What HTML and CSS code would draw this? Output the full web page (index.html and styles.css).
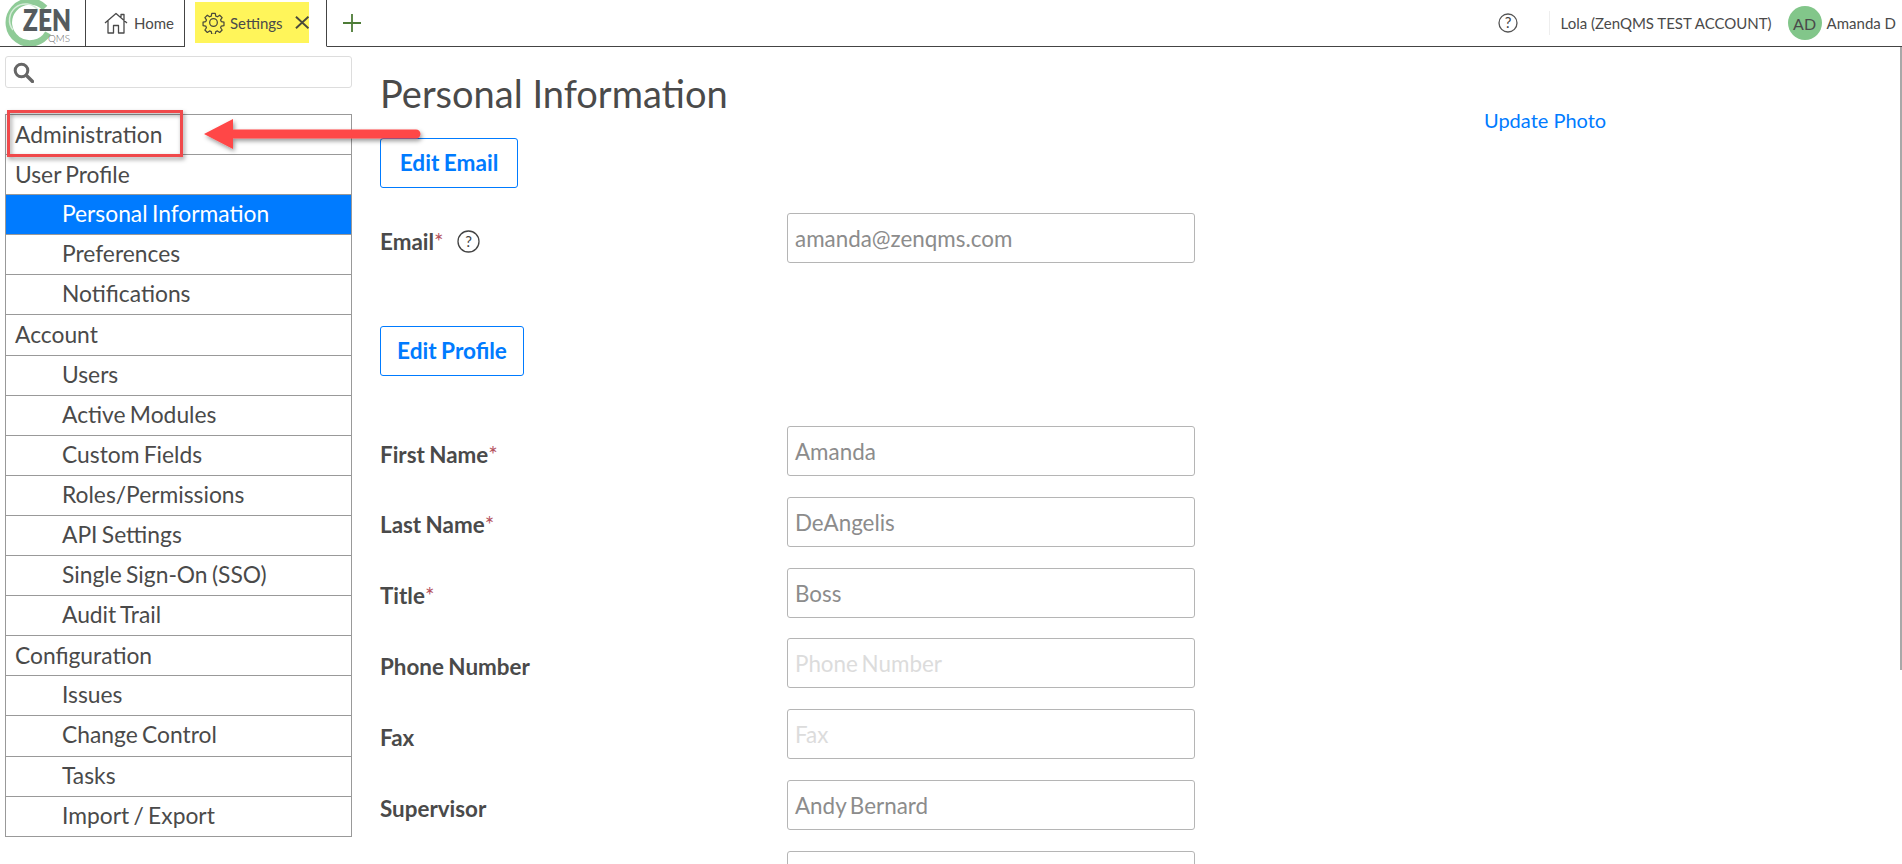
FILE: index.html
```html
<!DOCTYPE html>
<html lang="en">
<head>
<meta charset="utf-8">
<title>Personal Information</title>
<link rel="stylesheet" href="styles.css">
</head>
<body>
<header class="topbar">
  <div class="logo">
    <svg width="85" height="46" viewBox="0 0 85 46">
      <path d="M45 8A21 21 0 1 0 48 33" fill="none" stroke="#8fcb97" stroke-width="6.500"/>
      <path d="M38 10A15.500 15.500 0 0 0 13 30" fill="none" stroke="#d6ecd9" stroke-width="1.500"/>
      <text x="23" y="31" textLength="48" lengthAdjust="spacingAndGlyphs" class="logo-zen">ZEN</text>
      <text x="48" y="42" textLength="22" lengthAdjust="spacingAndGlyphs" class="logo-qms">QMS</text>
    </svg>
  </div>
  <div class="tab tab-home">
    <svg class="tab-icon" width="24" height="22" viewBox="0 0 24 22"><path d="M1 11 12 1.500 23 11M17 6V2.500h3v7M4 9v12h5.500v-7.500h5V21H20V9" fill="none" stroke="#4a4a4a" stroke-width="1.300" stroke-linejoin="round"/></svg>
    <span>Home</span>
  </div>
  <div class="tab tab-settings">
    <div class="tab-mark">
      <svg class="tab-icon" width="23" height="23" viewBox="0 0 24 24"><path d="M10 1.500h4l.6 3.100 1.900.8 2.600-1.800 2.800 2.800-1.800 2.600.8 1.900 3.100.6v4l-3.100.6-.8 1.900 1.800 2.600-2.800 2.800-2.600-1.800-1.900.8-.6 3.100h-4l-.6-3.100-1.900-.8-2.600 1.800-2.800-2.800 1.800-2.600-.8-1.900-3.100-.6v-4l3.100-.6.800-1.900-1.800-2.600 2.800-2.800 2.600 1.800 1.900-.8z" transform="translate(1.100 1.100) scale(.91)" fill="none" stroke="#4a4a3a" stroke-width="1.400" stroke-linejoin="round"/><circle cx="12" cy="12" r="4" fill="none" stroke="#4a4a3a" stroke-width="1.300"/></svg>
      <span>Settings</span>
      <svg class="tab-close" width="15" height="13" viewBox="0 0 15 13"><path d="M1 .5 14 12.500M14 .5 1 12.500" stroke="#4a4a3a" stroke-width="2"/></svg>
    </div>
  </div>
  <svg class="tab-add" width="18" height="18" viewBox="0 0 18 18"><path d="M9 0v18M0 9h18" stroke="#4d7c37" stroke-width="1.800"/></svg>
  <div class="top-right">
    <svg class="help" width="20" height="20" viewBox="0 0 20 20"><circle cx="10" cy="10" r="9" fill="none" stroke="#555" stroke-width="1.300"/><text x="10" y="15" class="help-mark">?</text></svg>
    <span class="top-divider"></span>
    <span class="org">Lola (ZenQMS TEST ACCOUNT)</span>
    <span class="avatar">AD</span>
    <span class="user">Amanda D</span>
  </div>
</header>

<div class="page">
  <aside class="sidebar">
    <div class="search">
      <svg width="21" height="21" viewBox="0 0 21 21"><circle cx="8.500" cy="8.500" r="6.300" fill="none" stroke="#666" stroke-width="3"/><path d="m13.500 13.500 6 6" stroke="#666" stroke-width="3.400" stroke-linecap="round"/></svg>
    </div>
    <nav class="menu">
      <div class="menu-row">Administration</div>
      <div class="menu-row">User Profile</div>
      <div class="menu-row sub active">Personal Information</div>
      <div class="menu-row sub">Preferences</div>
      <div class="menu-row sub">Notifications</div>
      <div class="menu-row">Account</div>
      <div class="menu-row sub">Users</div>
      <div class="menu-row sub">Active Modules</div>
      <div class="menu-row sub">Custom Fields</div>
      <div class="menu-row sub">Roles/Permissions</div>
      <div class="menu-row sub">API Settings</div>
      <div class="menu-row sub">Single Sign-On (SSO)</div>
      <div class="menu-row sub">Audit Trail</div>
      <div class="menu-row">Configuration</div>
      <div class="menu-row sub">Issues</div>
      <div class="menu-row sub">Change Control</div>
      <div class="menu-row sub">Tasks</div>
      <div class="menu-row sub">Import / Export</div>
    </nav>
  </aside>

  <main class="content">
    <div class="form">
      <h1>Personal Information</h1>
      <button class="btn btn-email">Edit Email</button>
      <div class="row row-email">
        <label>Email<span class="req">*</span>
          <svg class="label-help" width="23" height="23" viewBox="0 0 23 23"><circle cx="11.500" cy="11.500" r="10.500" fill="none" stroke="#444" stroke-width="1.300"/><text x="11.500" y="17" class="help-mark">?</text></svg>
        </label>
        <div class="field">amanda@zenqms.com</div>
      </div>
      <button class="btn btn-profile">Edit Profile</button>
      <div class="row"><label>First Name<span class="req">*</span></label><div class="field">Amanda</div></div>
      <div class="row"><label>Last Name<span class="req">*</span></label><div class="field">DeAngelis</div></div>
      <div class="row"><label>Title<span class="req">*</span></label><div class="field">Boss</div></div>
      <div class="row"><label>Phone Number</label><div class="field empty">Phone Number</div></div>
      <div class="row"><label>Fax</label><div class="field empty">Fax</div></div>
      <div class="row"><label>Supervisor</label><div class="field">Andy Bernard</div></div>
      <div class="row"><label></label><div class="field"></div></div>
    </div>
    <a class="photo-link" href="#">Update Photo</a>
  </main>
</div>

<div class="scroll-thumb"></div>

<svg class="annotation" width="440" height="170" viewBox="0 0 440 170">
  <defs>
    <filter id="callout-shadow" x="-10%" y="-30%" width="120%" height="170%">
      <feDropShadow dx="1.500" dy="2.500" stdDeviation="2" flood-color="#000" flood-opacity=".4"/>
    </filter>
  </defs>
  <rect x="8.500" y="111.500" width="173" height="44" fill="none" stroke="#f0484b" stroke-width="3" filter="url(#callout-shadow)"/>
  <path d="M204 134 233 119V129.500H416a4.500 4.500 0 0 1 0 9H233V149z" fill="#ff4646" filter="url(#callout-shadow)"/>
</svg>
</body>
</html>
```

FILE: styles.css
```css
* { box-sizing: border-box; }

html, body {
  margin: 0;
  height: 864px;
  overflow: hidden;
  background: #fff;
  color: #4a4a4a;
  font-family: Lato, "Open Sans", sans-serif;
}

.topbar {
  display: flex;
  align-items: stretch;
  height: 47px;
  border-bottom: 1px solid #444;
  font-size: 15px;
}

.logo {
  width: 86px;
  border-right: 1px solid #444;
  flex: none;
  overflow: hidden;
}

.logo svg { display: block; }
.logo-zen { font: 800 30px Lato, sans-serif; fill: #555b5e; }
.logo-qms { font: 300 10px Lato, sans-serif; fill: #666; }

.tab {
  display: flex;
  align-items: center;
}

.tab-home {
  width: 99px;
  padding-left: 18px;
  gap: 6px;
  border-right: 1px solid #444;
}

.tab-settings {
  width: 142px;
  height: 47px;
  padding: 2px 0 3px 10px;
  border-right: 1px solid #444;
  background: #fff;
  border-bottom: 1px solid #fff;
}

.tab-mark {
  display: flex;
  align-items: center;
  width: 114px;
  height: 41px;
  padding-left: 7px;
  background: #fff55a;
}

.tab-mark span { margin-left: 5px; }
.tab-close { margin-left: 12px; }
.tab-icon { flex: none; }
.tab-add { align-self: center; margin-left: 16px; }

.top-right {
  display: flex;
  align-items: center;
  margin-left: auto;
}

.help { margin-right: 31px; }
.help-mark { font: 400 15px Lato, sans-serif; fill: #444; text-anchor: middle; }

.top-divider {
  width: 1px;
  height: 24px;
  background: #eee;
  margin-right: 11px;
}

.org { margin-right: 16px; font-size: 15px; }

.avatar {
  display: flex;
  align-items: center;
  justify-content: center;
  width: 34px;
  height: 34px;
  border-radius: 50%;
  background: #82c68a;
  font-size: 16px;
  margin-right: 5px;
}

.user { margin-right: 6px; }

.page { display: flex; }

.sidebar {
  flex: none;
  width: 347px;
  margin-left: 5px;
  padding-top: 9px;
}

.search {
  height: 32px;
  border: 1px solid #ddd;
  border-radius: 3px;
  padding: 5px 0 0 7px;
  margin-bottom: 26px;
}

.search svg { display: block; }

.menu {
  border: 1px solid #999;
  border-bottom-width: 0;
}

.menu-row {
  height: 40.1px;
  line-height: 39px;
  padding-left: 9px;
  border-bottom: 1px solid #999;
  font-size: 22.8px;
  word-spacing: -1.500px;
  white-space: nowrap;
}

.menu-row.sub { padding-left: 56px; line-height: 37.500px; }
.menu-row.active { background: #007bff; color: #fff; }

.content {
  flex: 1;
  display: flex;
  align-items: flex-start;
  padding: 24px 0 0 28px;
}

.form { width: 815px; flex: none; }

h1 {
  margin: 0 0 23px;
  font-size: 38px;
  line-height: 44px;
  font-weight: 400;
}

.btn {
  display: block;
  height: 50px;
  padding: 0 0 2px;
  background: #fff;
  border: 1px solid #007bff;
  border-radius: 3px;
  color: #007bff;
  font: 700 22.6px Lato, sans-serif;
  word-spacing: -1px;
}

.btn-email { width: 138px; margin-bottom: 25px; }
.btn-profile { width: 144px; margin: 63px 0 50px; }

.row {
  display: grid;
  grid-template-columns: 407px 408px;
  align-items: center;
  height: 50px;
  margin-bottom: 20.83px;
}

.row-email { margin-bottom: 0; }

.row label {
  display: flex;
  align-items: center;
  padding-top: 6px;
  font-size: 22.4px;
  font-weight: 700;
  word-spacing: -1px;
}

.req { color: #b5545f; font-weight: 400; }
.label-help { margin-left: 13px; }

.field {
  height: 50px;
  line-height: 49px;
  padding-left: 7px;
  border: 1px solid #b5b5b5;
  border-radius: 3px;
  color: #8c8c8c;
  font-size: 22.4px;
  word-spacing: -2px;
}

.field.empty { color: #dcdcdc; }

.photo-link {
  margin: 37px 0 0 289px;
  font-size: 20px;
  line-height: 24px;
  color: #007bff;
  text-decoration: none;
  white-space: nowrap;
}

.scroll-thumb {
  position: absolute;
  top: 47px;
  right: 0;
  width: 2px;
  height: 623px;
  background: #a8a8a8;
}

.annotation {
  position: absolute;
  top: 0;
  left: 0;
  pointer-events: none;
}
```
